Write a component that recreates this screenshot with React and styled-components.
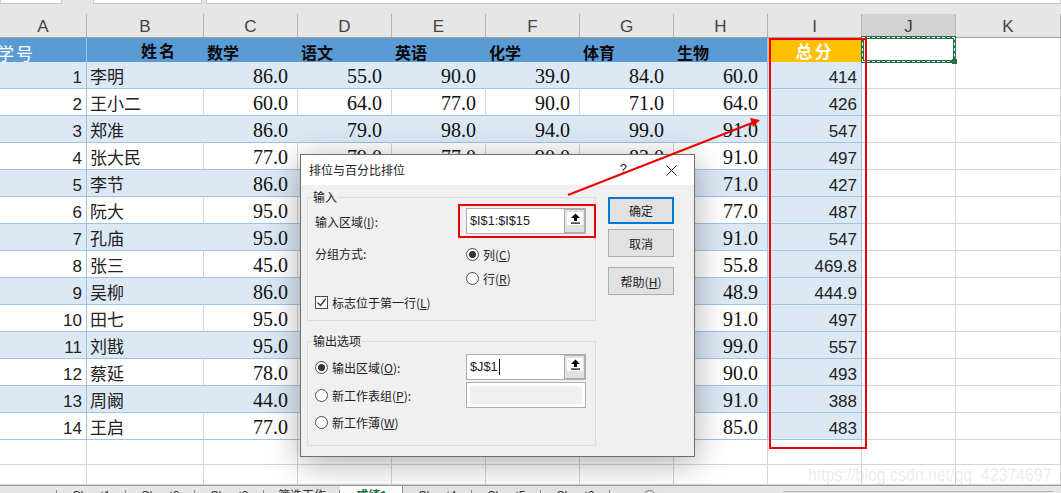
import styled, { createGlobalStyle } from "styled-components";

const GlobalStyle = createGlobalStyle`
  html, body {
    margin: 0;
    padding: 0;
    background: #fff;
  }
  * {
    box-sizing: border-box;
  }
`;

const COLUMNS = "87px 117px repeat(8, 94px) 1fr";
const BLUE_LINE = "#9dc3e6";
const GRID_LINE = "#d4d4d4";
const BAND = "#dce9f5";
const CJK = `"Noto Sans CJK SC", sans-serif`;

const Page = styled.div`
  position: relative;
  width: 1061px;
  height: 493px;
  overflow: hidden;
  background: #fff;
  font-family: "Liberation Sans", ${CJK};
`;

const FormulaBar = styled.div`
  display: flex;
  height: 14px;
  background: #e6e6e6;
`;

const FormulaBox = styled.div`
  width: ${(p) => p.$width};
  margin-right: ${(p) => p.$gap || 0};
  flex: ${(p) => (p.$grow ? 1 : "none")};
  height: 4px;
  background: #fff;
  border: 1px solid #c8c8c8;
  border-top: none;
`;

const ColumnHeader = styled.div`
  display: grid;
  grid-template-columns: ${COLUMNS};
  height: 24px;
  background: #e6e6e6;
  border-bottom: 1px solid #9f9f9f;
`;

const ColumnLabel = styled.div`
  display: flex;
  align-items: center;
  justify-content: center;
  padding-top: 3px;
  font-size: 17px;
  color: #444;
  background: ${(p) => (p.$active ? "#d2d2d2" : "transparent")};
  border-right: 1px solid #b4b4b4;
`;

const Row = styled.div`
  display: grid;
  grid-template-columns: ${COLUMNS};
  height: ${(p) => p.$height}px;
`;

const Cell = styled.div`
  display: flex;
  align-items: center;
  justify-content: ${(p) => (p.$left ? "flex-start" : "flex-end")};
  padding: ${(p) => (p.$left ? "0 0 0 3px" : `6px ${p.$pad || 4}px 0 0`)};
  background: ${(p) => (p.$band ? BAND : "#fff")};
  border-bottom: 1px solid ${(p) => (p.$table ? BLUE_LINE : GRID_LINE)};
  border-right: 1px solid
    ${(p) => (p.$edge ? BLUE_LINE : p.$band ? "transparent" : GRID_LINE)};
  color: #222;
  font-size: 17px;
  white-space: nowrap;
`;

const ScoreCell = styled(Cell)`
  padding-top: 2px;
  font-family: "Liberation Serif", serif;
  font-size: 20px;
  color: #111;
`;

const HeadCell = styled.div`
  display: flex;
  align-items: center;
  padding-left: 3px;
  padding-bottom: 4px;
  background: #5b9bd5;
  border-bottom: 1px solid ${BLUE_LINE};
  border-right: 1px solid ${(p) => (p.$edge ? BLUE_LINE : "transparent")};
  color: #0a0a0a;
  font-family: ${CJK};
  font-size: 16px;
  font-weight: 700;
  white-space: nowrap;
`;

const NumberHead = styled(HeadCell)`
  padding: 0 0 3px;
  color: #fff;
  font-size: 17px;
  font-weight: 400;
  letter-spacing: 2px;
  text-indent: -3px;
`;

const NameHead = styled(HeadCell)`
  padding: 0 0 7px 54px;
  letter-spacing: 2px;
`;

const TotalHead = styled(HeadCell)`
  justify-content: center;
  padding: 0 0 6px;
  background: #ffc000;
  border-right-color: #ffc000;
  color: #fff;
  font-size: 17px;
  letter-spacing: 2px;
`;

const PlainHead = styled.div`
  background: #fff;
  border-bottom: 1px solid ${GRID_LINE};
  border-right: 1px solid ${GRID_LINE};
`;

const CopyMarquee = styled.div`
  position: absolute;
  left: 861px;
  top: 36px;
  width: 95px;
  height: 27px;
  border: 3px solid #217346;
  &::before {
    content: "";
    position: absolute;
    inset: -2px;
    border: 1px dashed #fff;
  }
  &::after {
    content: "";
    position: absolute;
    right: -4px;
    bottom: -4px;
    width: 5px;
    height: 5px;
    background: #217346;
  }
`;

const SheetTabs = styled.div`
  position: absolute;
  left: 0;
  right: 0;
  bottom: 0;
  display: flex;
  height: 8px;
  overflow: hidden;
  background: #e6e6e6;
  border-top: 1px solid #9f9f9f;
  font-size: 12px;
  color: #333;
`;

const SheetTab = styled.div`
  position: relative;
  flex: none;
  width: ${(p) => p.$width}px;
  padding-top: 3px;
  text-align: center;
  line-height: 14px;
  background: ${(p) => (p.$active ? "#fff" : "transparent")};
  color: ${(p) => (p.$active ? "#217346" : "#333")};
  font-weight: ${(p) => (p.$active ? 700 : 400)};
  &::after {
    content: "";
    position: absolute;
    right: 0;
    top: ${(p) => (p.$active ? 0 : "4px")};
    bottom: 0;
    width: 1px;
    background: #8f8f8f;
  }
`;

const AddSheet = styled.div`
  flex: none;
  width: 13px;
  height: 13px;
  margin: 4px 0 0 33px;
  border: 1px solid #777;
  border-radius: 50%;
`;

const Scrollbar = styled.div`
  flex: none;
  width: 270px;
  margin: 5px 0 0 127px;
  border-top: 1px solid #b4b4b4;
`;

const Dialog = styled.div`
  position: absolute;
  left: 300px;
  top: 154px;
  width: 395px;
  height: 303px;
  background: #f0f0f0;
  border: 1px solid #6e6e6e;
  box-shadow: 0 6px 32px rgba(0, 0, 0, 0.32);
  font-family: ${CJK};
  font-size: 12px;
  color: #222;
`;

const TitleBar = styled.div`
  display: flex;
  align-items: center;
  height: 30px;
  padding: 0 17px 0 8px;
  background: #fff;
`;

const Title = styled.div`
  flex: 1;
  margin-top: -2px;
`;

const HelpMark = styled.div`
  margin: -4px 39px 0 0;
  font-family: "Liberation Sans", sans-serif;
  font-size: 13px;
`;

const DialogBody = styled.div`
  display: flex;
  gap: 12px;
  padding: 12px 0 0 6px;
`;

const Groups = styled.div`
  display: flex;
  flex-direction: column;
  gap: 20px;
  width: 289px;
`;

const Group = styled.div`
  position: relative;
  display: grid;
  grid-template-columns: 151px 120px;
  grid-template-rows: ${(p) => p.$rows};
  row-gap: ${(p) => p.$gap || 0}px;
  align-items: end;
  height: ${(p) => p.$height}px;
  padding: ${(p) => p.$top}px 0 0 7px;
  border: 1px solid #dcdcdc;
`;

const Legend = styled.div`
  position: absolute;
  left: 4px;
  top: -9px;
  padding: 0 1px;
  line-height: 16px;
  background: #f0f0f0;
`;

const FieldLabel = styled.div`
  line-height: 24px;
  white-space: nowrap;
  padding-top: ${(p) => p.$drop || 0}px;
`;

const Option = styled.div`
  display: flex;
  align-items: center;
  gap: 4px;
  height: ${(p) => p.$height || 24}px;
  padding-bottom: ${(p) => p.$lift || 0}px;
  white-space: nowrap;
`;

const Radio = styled.span`
  display: flex;
  align-items: center;
  justify-content: center;
  width: 13px;
  height: 13px;
  background: #fff;
  border: 1px solid #4a4a4a;
  border-radius: 50%;
  &::after {
    content: "";
    width: 7px;
    height: 7px;
    border-radius: 50%;
    background: ${(p) => (p.$checked ? "#333" : "transparent")};
  }
`;

const CheckBox = styled.span`
  display: flex;
  width: 13px;
  height: 13px;
  background: #fff;
  border: 1px solid #4a4a4a;
`;

const RefInput = styled.div`
  display: flex;
  align-items: center;
  width: 120px;
  height: 26px;
  background: #fff;
  border: 1px solid #abadb3;
  font-family: "Liberation Sans", sans-serif;
  font-size: 12.7px;
`;

const RefValue = styled.div`
  display: flex;
  align-items: center;
  flex: 1;
  padding-left: 3px;
`;

const Caret = styled.span`
  width: 1px;
  height: 16px;
  margin-left: 1px;
  background: #111;
`;

const RefButton = styled.div`
  align-self: stretch;
  width: 22px;
  margin: -1px -1px -1px 0;
  padding: 2px 0 0 2px;
  background: #e1e1e1;
  border: 2px solid #adadad;
  border-left: 1px solid #adadad;
`;

const RefIcon = styled.div`
  display: flex;
  justify-content: center;
  align-items: center;
  width: 16px;
  height: 13px;
  background: #fff;
`;

const DisabledInput = styled.div`
  width: 120px;
  height: 26px;
  padding: 3px;
  background: #fff;
  border: 1px solid #abadb3;
  &::after {
    content: "";
    display: block;
    height: 18px;
    background: #f0f0f0;
  }
`;

const Buttons = styled.div`
  display: flex;
  flex-direction: column;
  width: 66px;
`;

const DialogButton = styled.div`
  display: flex;
  align-items: center;
  justify-content: center;
  height: ${(p) => (p.$primary ? 27 : 28)}px;
  margin-bottom: ${(p) => p.$after || 0}px;
  background: #e1e1e1;
  border: ${(p) => (p.$primary ? "2px solid #0078d7" : "1px solid #adadad")};
`;

const RedBox = styled.div`
  position: absolute;
  left: ${(p) => p.$x}px;
  top: ${(p) => p.$y}px;
  width: ${(p) => p.$w}px;
  height: ${(p) => p.$h}px;
  border: 2px solid #f00000;
`;

const Arrow = styled.svg`
  position: absolute;
  left: 0;
  top: 0;
  pointer-events: none;
`;

const Watermark = styled.div`
  position: absolute;
  left: 808px;
  top: 463px;
  font-size: 19px;
  line-height: 24px;
  color: rgba(190, 190, 190, 0.3);
  white-space: nowrap;
  transform: scaleX(0.835);
  transform-origin: left center;
`;

const LETTERS = ["A", "B", "C", "D", "E", "F", "G", "H", "I", "J", "K"];
const SUBJECTS = ["数学", "语文", "英语", "化学", "体育", "生物"];

const STUDENTS = [
  ["李明", [86, 55, 90, 39, 84, 60], "414"],
  ["王小二", [60, 64, 77, 90, 71, 64], "426"],
  ["郑准", [86, 79, 98, 94, 99, 91], "547"],
  ["张大民", [77, 79, 77, 90, 83, 91], "497"],
  ["李节", [86, 60, 70, 70, 70, 71], "427"],
  ["阮大", [95, 80, 78, 79, 78, 77], "487"],
  ["孔庙", [95, 90, 91, 90, 90, 91], "547"],
  ["张三", [45, 89, 90, 90, 90, 55.8], "469.8"],
  ["吴柳", [86, 70, 80, 80, 80, 48.9], "444.9"],
  ["田七", [95, 80, 78, 76, 77, 91], "497"],
  ["刘戡", [95, 90, 90, 92, 91, 99], "557"],
  ["蔡延", [78, 80, 85, 80, 80, 90], "493"],
  ["周阚", [44, 60, 63, 60, 70, 91], "388"],
  ["王启", [77, 80, 81, 80, 80, 85], "483"],
];

function ArrowUpIcon() {
  return (
    <svg width="11" height="11" viewBox="0 0 11 11">
      <path d="M5.5 0.5 L10 5 H7 V8 H4 V5 H1 Z" fill="#000" />
      <rect x="1" y="9.5" width="9" height="1.2" fill="#000" />
    </svg>
  );
}

function CloseIcon() {
  return (
    <svg width="11" height="11" viewBox="0 0 11 11">
      <path d="M0.5 0.5 L10.5 10.5 M10.5 0.5 L0.5 10.5" stroke="#222" strokeWidth="1" />
    </svg>
  );
}

function CheckIcon() {
  return (
    <svg width="11" height="11" viewBox="0 0 11 11">
      <path d="M1.5 5.5 L4.5 8.5 L9.5 2" fill="none" stroke="#333" strokeWidth="1.3" />
    </svg>
  );
}

function RefBox({ value, caret }) {
  return (
    <RefInput>
      <RefValue>
        {value}
        {caret && <Caret />}
      </RefValue>
      <RefButton>
        <RefIcon>
          <ArrowUpIcon />
        </RefIcon>
      </RefButton>
    </RefInput>
  );
}

function StudentRow({ index, name, scores, total }) {
  const band = index % 2 === 0;
  return (
    <Row $height={27}>
      <Cell $table $band={band} $edge>
        {index + 1}
      </Cell>
      <Cell $table $band={band} $left>
        {name}
      </Cell>
      {scores.map((score, i) => (
        <ScoreCell key={i} $table $band={band} $edge={i === 5} $pad={9}>
          {score.toFixed(1)}
        </ScoreCell>
      ))}
      <Cell $table $band $edge>
        {total}
      </Cell>
      <Cell />
      <Cell />
    </Row>
  );
}

function BlankRow({ height }) {
  return (
    <Row $height={height}>
      {LETTERS.map((letter) => (
        <Cell key={letter} />
      ))}
    </Row>
  );
}

export default function App() {
  return (
    <Page>
      <GlobalStyle />
      <FormulaBar>
        <FormulaBox $width="62px" $gap="31px" />
        <FormulaBox $width="109px" $gap="4px" />
        <FormulaBox $grow />
      </FormulaBar>
      <ColumnHeader>
        {LETTERS.map((letter) => (
          <ColumnLabel key={letter} $active={letter === "J"}>
            {letter}
          </ColumnLabel>
        ))}
      </ColumnHeader>
      <Row $height={24}>
        <NumberHead $edge>学号</NumberHead>
        <NameHead>姓名</NameHead>
        {SUBJECTS.map((subject, i) => (
          <HeadCell key={subject} $edge={i === 5}>
            {subject}
          </HeadCell>
        ))}
        <TotalHead>总分</TotalHead>
        <PlainHead />
        <PlainHead />
      </Row>
      {STUDENTS.map(([name, scores, total], i) => (
        <StudentRow key={name} index={i} name={name} scores={scores} total={total} />
      ))}
      <BlankRow height={25} />
      <BlankRow height={20} />

      <SheetTabs>
        <SheetTab $width={57} />
        <SheetTab $width={69}>Sheet1</SheetTab>
        <SheetTab $width={69}>Sheet2</SheetTab>
        <SheetTab $width={69}>Sheet3</SheetTab>
        <SheetTab $width={76}>筛选工作</SheetTab>
        <SheetTab $width={63} $active>
          成绩1
        </SheetTab>
        <SheetTab $width={69}>Sheet4</SheetTab>
        <SheetTab $width={69}>Sheet5</SheetTab>
        <SheetTab $width={69}>Sheet6</SheetTab>
        <AddSheet />
        <Scrollbar />
      </SheetTabs>

      <CopyMarquee />

      <Dialog>
        <TitleBar>
          <Title>排位与百分比排位</Title>
          <HelpMark>?</HelpMark>
          <CloseIcon />
        </TitleBar>
        <DialogBody>
          <Groups>
            <Group $rows="26px 32px 24px 24px" $top={10} $height={124}>
              <Legend>输入</Legend>
              <FieldLabel>
                输入区域(<u>I</u>):
              </FieldLabel>
              <RefBox value="$I$1:$I$15" />
              <FieldLabel $drop={2}>分组方式:</FieldLabel>
              <Option>
                <Radio $checked />
                <span>
                  列(<u>C</u>)
                </span>
              </Option>
              <span />
              <Option>
                <Radio />
                <span>
                  行(<u>R</u>)
                </span>
              </Option>
              <Option>
                <CheckBox>
                  <CheckIcon />
                </CheckBox>
                <span>
                  标志位于第一行(<u>L</u>)
                </span>
              </Option>
            </Group>
            <Group $rows="26px 26px 28px" $gap={2} $top={12} $height={105}>
              <Legend>输出选项</Legend>
              <Option $height={26}>
                <Radio $checked />
                <span>
                  输出区域(<u>O</u>):
                </span>
              </Option>
              <RefBox value="$J$1" caret />
              <Option $height={26}>
                <Radio />
                <span>
                  新工作表组(<u>P</u>):
                </span>
              </Option>
              <DisabledInput />
              <Option $height={28} $lift={4}>
                <Radio />
                <span>
                  新工作薄(<u>W</u>)
                </span>
              </Option>
            </Group>
          </Groups>
          <Buttons>
            <DialogButton $primary $after={5}>
              确定
            </DialogButton>
            <DialogButton $after={10}>取消</DialogButton>
            <DialogButton>
              <span>
                帮助(<u>H</u>)
              </span>
            </DialogButton>
          </Buttons>
        </DialogBody>
      </Dialog>

      <RedBox $x={769} $y={38} $w={98} $h={411} />
      <RedBox $x={458} $y={204} $w={138} $h={34} />
      <Arrow width="1061" height="493" viewBox="0 0 1061 493">
        <line x1="568" y1="195" x2="752" y2="123" stroke="#f00000" strokeWidth="2" />
        <path d="M760 120 L750 118 L753 127 Z" fill="#f00000" />
      </Arrow>
      <Watermark>https://blog.csdn.net/qq_42374697</Watermark>
    </Page>
  );
}
